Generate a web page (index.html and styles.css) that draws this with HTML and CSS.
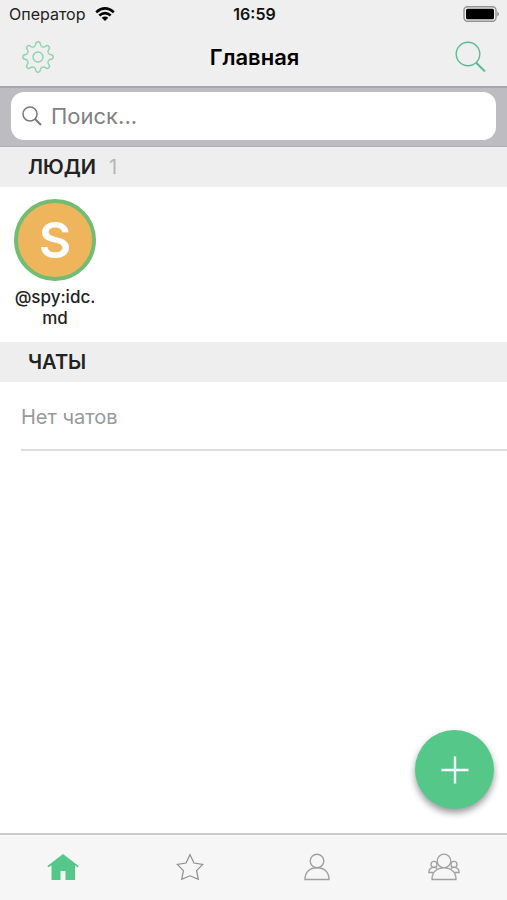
FILE: index.html
```html
<!DOCTYPE html>
<html lang="ru">
<head>
<meta charset="utf-8">
<meta name="viewport" content="width=device-width, initial-scale=1">
<title>Главная</title>
<link rel="stylesheet" href="styles.css">
</head>
<body>
<header class="top">
  <div class="status">
    <div class="carrier">
      <span>Оператор</span>
      <svg width="20" height="14" viewBox="0 0 20 14" fill="none" stroke="#000" stroke-width="2.6" aria-hidden="true"><path d="M1.2 5.2Q10-2.4 18.8 5.2M4.3 8.5Q10 3.6 15.7 8.5"/><path d="M10 14 6.7 10.8Q10 8 13.3 10.8Z" fill="#000" stroke="none"/></svg>
    </div>
    <time class="clock">16:59</time>
    <svg class="battery" width="37" height="16" viewBox="0 0 37 16" aria-hidden="true"><rect x="1" y=".8" width="32" height="14.4" rx="3.5" fill="none" stroke="#929292" stroke-width="1.4"/><rect x="3" y="2.8" width="28" height="10.4" rx="1.5"/><path d="M34.5 5.5Q37 8 34.5 10.5Z" fill="#666"/></svg>
  </div>
  <nav class="navbar">
    <button class="icon-button" aria-label="Настройки">
      <svg width="32" height="32" viewBox="-16 -16 32 32" fill="none" stroke="#8fd1b3" stroke-width="1.4">
        <defs><path id="tooth" d="M-4.2-10.2C-2.9-10.7-2.5-11.4-2.3-13C-2.1-14.7-1.4-15.2 0-15.2C1.4-15.2 2.1-14.7 2.3-13C2.5-11.4 2.9-10.7 4.2-10.2"/></defs>
        <use href="#tooth"/><use href="#tooth" transform="rotate(45)"/><use href="#tooth" transform="rotate(90)"/><use href="#tooth" transform="rotate(135)"/><use href="#tooth" transform="rotate(180)"/><use href="#tooth" transform="rotate(225)"/><use href="#tooth" transform="rotate(270)"/><use href="#tooth" transform="rotate(315)"/>
        <circle r="5"/>
      </svg>
    </button>
    <h1>Главная</h1>
    <button class="icon-button" aria-label="Поиск">
      <svg width="32" height="32" viewBox="0 0 32 32" fill="none" stroke="#55bf92"><circle cx="13" cy="13" r="11.8" stroke-width="1.4"/><path d="m21.2 21.7 8.8 8.8" stroke-width="2"/></svg>
    </button>
  </nav>
</header>
<div class="searchbar">
  <label class="field">
    <svg width="20" height="20" viewBox="0 0 20 20" fill="none" stroke="#77777b" aria-hidden="true"><circle cx="8" cy="8" r="7" stroke-width="1.5"/><path d="m13 13 6 6" stroke-width="2"/></svg>
    <input type="search" placeholder="Поиск..." aria-label="Поиск">
  </label>
</div>
<main>
  <section>
    <h2>ЛЮДИ <span class="count">1</span></h2>
    <div class="people">
      <a class="person" href="#"><span class="avatar">S</span><span class="name">@spy:idc.<wbr>md</span></a>
    </div>
  </section>
  <section>
    <h2>ЧАТЫ</h2>
    <p class="empty">Нет чатов</p>
  </section>
  <button class="fab" aria-label="Создать">
    <svg width="28" height="28" viewBox="0 0 28 28" stroke="#fff" stroke-width="2.4"><path d="M14 .5v27M.5 14h27"/></svg>
  </button>
</main>
<nav class="tabs">
  <a href="#" aria-label="Главная"><svg width="32" height="28" viewBox="0 0 32 28"><path fill="#55c789" d="M16 1 31.6 13 30.8 14.2 28 12.5V27H18.5V18H13.5V27H4.5V12.5L1.2 14.2.4 13Z"/></svg></a>
  <a href="#" aria-label="Избранное"><svg width="28" height="28" viewBox="0 0 28 28" fill="none" stroke="#8e8e8e" stroke-width="1.2"><path d="M14 1.7 18 10 26.7 11.3 20.6 17.7 22.3 26.3 14 22.8 5.7 26.3 7.4 17.7 1.3 11.3 10 10Z"/></svg></a>
  <a href="#" aria-label="Люди"><svg width="26" height="28" viewBox="0 0 26 28" fill="none" stroke="#a0a0a0" stroke-width="1.4"><circle cx="13" cy="8" r="6.8"/><path d="M1 26.5C1 19 6 14.8 13 14.8S25 19 25 26.5Z"/></svg></a>
  <a href="#" aria-label="Комнаты"><svg width="32" height="28" viewBox="0 0 32 28" fill="none" stroke="#a0a0a0" stroke-width="1.3"><circle cx="6" cy="11.4" r="3"/><circle cx="26" cy="11.4" r="3"/><path d="M5 19.5H.8Q1 14.5 6 14.4 8 14.4 9.3 15.6M27 19.5h4.2Q31 14.5 26 14.4 24 14.4 22.7 15.6"/><circle cx="16" cy="8" r="6.8" fill="#f6f6f6"/><path fill="#f6f6f6" d="M4 26.5C4 19 9 14.8 16 14.8S28 19 28 26.5Z"/></svg></a>
</nav>
</body>
</html>
```
FILE: styles.css
```css
* { box-sizing: border-box; }
body {
  margin: 0;
  min-height: 100vh;
  display: flex;
  flex-direction: column;
  background: #fff;
  color: #222;
  font-family: Inter, "Liberation Sans", sans-serif;
}
svg { display: block; }
button { border: 0; padding: 0; background: none; }
h1, h2, p { margin: 0; }
a { color: inherit; text-decoration: none; }

.top { background: #efefef; border-bottom: 2px solid #a6a6aa; }
.status {
  display: grid;
  grid-template-columns: 1fr auto 1fr;
  align-items: center;
  height: 28px;
  padding: 0 7px 0 9px;
  font-size: 16px;
  color: #222;
}
.carrier { display: flex; align-items: center; gap: 10px; }
.clock { font-weight: 600; color: #111; }
.battery { justify-self: end; }
.navbar {
  display: flex;
  align-items: center;
  justify-content: space-between;
  height: 58px;
  padding: 0 20px 0 22px;
}
h1 { font-size: 22px; line-height: 28px; font-weight: 600; color: #000; }

.searchbar {
  padding: 4px 11px 6px;
  background: #bdbdc1;
  border-bottom: 1px solid #b2b2b6;
}
.field {
  display: flex;
  align-items: center;
  gap: 9px;
  height: 48px;
  padding: 0 11px;
  border-radius: 13px;
  background: #fff;
}
.field input {
  flex: 1;
  min-width: 0;
  border: 0;
  padding: 0;
  outline: 0;
  background: none;
  font: 22px/28px Inter, "Liberation Sans", sans-serif;
}
.field input::placeholder { color: #818181; opacity: 1; }

main { flex: 1; }
h2 {
  display: flex;
  gap: 13px;
  padding: 0 28px;
  background: #eee;
  font-size: 20px;
  line-height: 40px;
  font-weight: 600;
}
.count { font-weight: 400; color: #b5b5b5; }
.people { display: flex; padding: 12px 12px 13px; }
.person {
  display: flex;
  flex-direction: column;
  align-items: center;
  gap: 6px;
  width: 86px;
}
.avatar {
  display: grid;
  place-items: center;
  width: 82px;
  height: 82px;
  border: 4px solid #72bd72;
  border-radius: 50%;
  background: #efb55c;
  color: #fff;
  font-size: 50px;
  font-weight: 600;
}
.name { font-size: 17px; line-height: 21px; font-weight: 500; text-align: center; }
.empty {
  margin-left: 21px;
  padding-top: 3px;
  border-bottom: 2px solid #dedede;
  font-size: 20px;
  line-height: 64px;
  color: #999;
}
.fab {
  position: fixed;
  right: 13px;
  bottom: 91px;
  display: grid;
  place-items: center;
  width: 79px;
  height: 79px;
  border-radius: 50%;
  background: #55c789;
  box-shadow: 0 4px 7px rgba(0, 0, 0, .4);
}

.tabs {
  display: grid;
  grid-template-columns: repeat(4, 1fr);
  height: 67px;
  padding-bottom: 2px;
  border-top: 2px solid #cbcbcb;
  background: #f6f6f6;
}
.tabs a { display: grid; place-items: center; }
```
